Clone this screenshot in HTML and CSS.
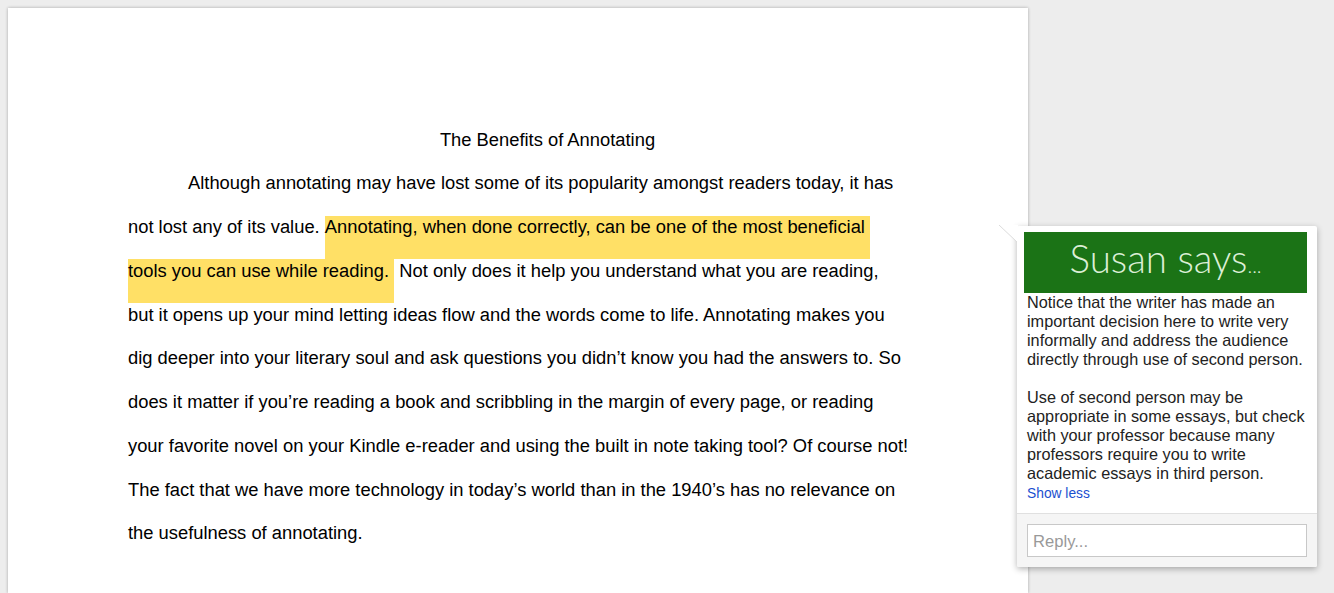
FILE: index.html
```html
<!DOCTYPE html>
<html lang="en">
<head>
<meta charset="utf-8">
<title>The Benefits of Annotating</title>
<link rel="stylesheet" href="styles.css">
</head>
<body>
<main class="paper">
  <h1 class="title">The Benefits of Annotating</h1>
  <p class="line indent">Although annotating may have lost some of its popularity amongst readers today, it has</p>
  <p class="line">not lost any of its value. <span class="mark">Annotating, when done correctly, can be one of the most beneficial </span></p>
  <p class="line"><span class="mark">tools you can use while reading.&nbsp;</span> Not only does it help you understand what you are reading,</p>
  <p class="line">but it opens up your mind letting ideas flow and the words come to life. Annotating makes you</p>
  <p class="line">dig deeper into your literary soul and ask questions you didn’t know you had the answers to. So</p>
  <p class="line">does it matter if you’re reading a book and scribbling in the margin of every page, or reading</p>
  <p class="line">your favorite novel on your Kindle e-reader and using the built in note taking tool? Of course not!</p>
  <p class="line">The fact that we have more technology in today’s world than in the 1940’s has no relevance on</p>
  <p class="line">the usefulness of annotating.</p>
</main>
<aside class="comment">
  <svg class="arrow" width="19" height="18" viewBox="0 0 19 18" aria-hidden="true"><path d="M0 0H19V18Z" fill="#fff"/><path d="M0 0L18 17" stroke="#dcdcdc" fill="none"/></svg>
  <div class="comment-body">
    <div class="banner">Susan says<span class="dots">...</span></div>
    <p class="comment-text">Notice that the writer has made an important decision here to write very informally and address the audience directly through use of second person.</p>
    <p class="comment-text second">Use of second person may be appropriate in some essays, but check with your professor because many professors require you to write academic essays in third person.</p>
    <a class="show-less" href="#">Show less</a>
  </div>
  <div class="reply-area">
    <div class="reply-box">Reply...</div>
  </div>
</aside>
</body>
</html>
```
FILE: styles.css
```css
html, body {
  margin: 0;
  height: 593px;
  overflow: hidden;
}
body {
  background: #ededed;
  padding: 8px 0 0 8px;
  box-sizing: border-box;
  font-family: "Liberation Sans", Arial, sans-serif;
  color: #000;
}
.paper {
  width: 1020px;
  height: 585px;
  background: #fff;
  box-sizing: border-box;
  padding: 120.6px 120px 0;
  box-shadow: 0 0 3px rgba(0, 0, 0, 0.3);
  font-size: 18.35px;
  line-height: 22px;
}
.title {
  margin: 0;
  font: inherit;
  text-align: center;
  height: 43.75px;
  padding-left: 59px;
}
.line {
  margin: 0;
  height: 43.75px;
  white-space: nowrap;
}
.indent {
  padding-left: 60px;
}
.mark {
  display: inline-block;
  height: 43.15px;
  margin-top: -0.6px;
  padding-top: 0.6px;
  vertical-align: top;
  background: #ffe066;
  white-space: pre;
}
.comment {
  position: absolute;
  left: 1017px;
  top: 226px;
  width: 300px;
  height: 341px;
  background: #fff;
  border-radius: 2px;
  box-shadow: 0 2px 6px rgba(0, 0, 0, 0.3);
  display: flex;
  flex-direction: column;
  color: #222;
}
.arrow {
  position: absolute;
  left: -18px;
  top: -1px;
}
.comment-body {
  flex: 1;
  padding: 6px 10px 0 7px;
}
.banner {
  height: 61px;
  background: #1b7316;
  color: #dcefd6;
  font-family: Lato, sans-serif;
  font-weight: 300;
  font-size: 38.5px;
  line-height: 52px;
  text-align: center;
}
.dots {
  font-size: 20px;
}
.comment-text {
  margin: 0 0 0 3px;
  font-size: 16.27px;
  line-height: 19px;
}
.second {
  margin-top: 19px;
}
.show-less {
  display: block;
  margin: 3px 0 0 3px;
  font-size: 13.8px;
  line-height: 16px;
  color: #1a4fd0;
  text-decoration: none;
}
.reply-area {
  height: 54px;
  box-sizing: border-box;
  background: #f5f5f5;
  border-top: 1px solid #e0e0e0;
  padding: 10px 10px 0;
  border-radius: 0 0 2px 2px;
}
.reply-box {
  height: 33px;
  box-sizing: border-box;
  background: #fff;
  border: 1px solid #c8c8c8;
  padding: 1px 5px 0;
  font-size: 16.6px;
  line-height: 32px;
  color: #999;
}
```
